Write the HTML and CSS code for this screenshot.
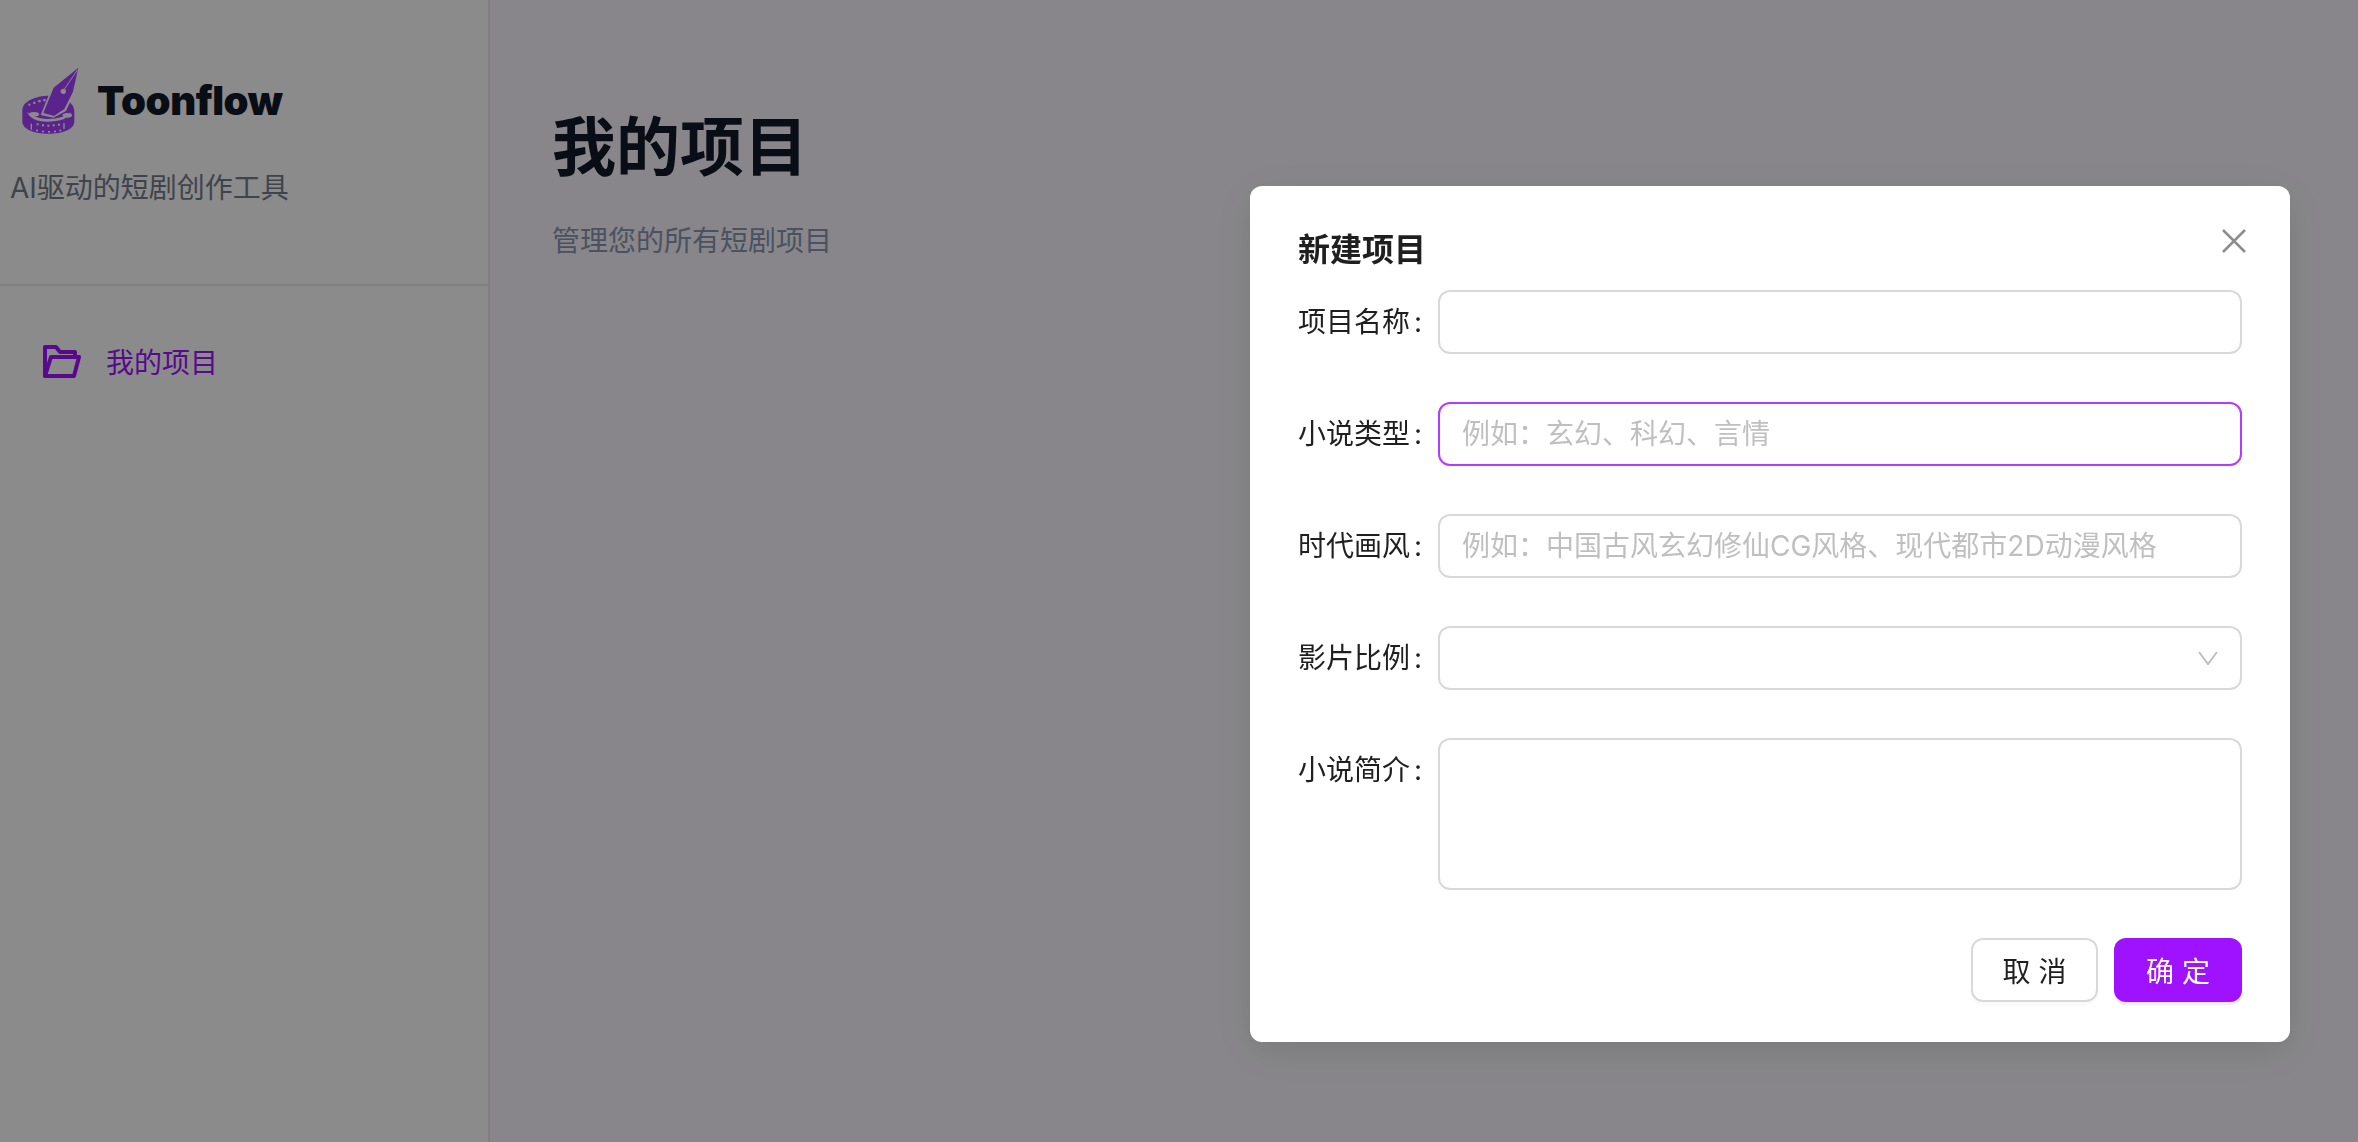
FILE: index.html
```html
<!DOCTYPE html>
<html lang="zh-CN">
<head>
    <meta charset="utf-8">
    <title>Toonflow</title>
    <link rel="stylesheet" href="styles.css">
</head>
<body>
    <div class="app">
        <aside class="sidebar">
            <div class="sidebar-head">
                <div class="brand">
                    <svg class="brand-logo" viewBox="0 0 240 255" width="80" height="85">
                        <!-- film reel -->
                        <path class="logo-fill" d="M37 165 C37 140 75 122 118 122 C160 122 193 142 193 170 L193 200 C193 222 158 236 115 236 C72 236 37 222 37 200 Z"/>
                        <path class="logo-hole" d="M52 170 C62 182 85 190 112 192 C145 192 172 184 182 172 C178 190 150 200 112 200 C80 200 56 188 52 170 Z"/>
                        <ellipse class="logo-hole" cx="72" cy="178" rx="15" ry="7"/>
                        <ellipse class="logo-hole" cx="172" cy="181" rx="14" ry="7"/>
                        <g class="logo-hole">
                            <rect x="55" y="146" width="6" height="6"/>
                            <rect x="70" y="140" width="6" height="7"/>
                            <rect x="85" y="135" width="7" height="7"/>
                            <rect x="100" y="132" width="7" height="7"/>
                            <rect x="62" y="206" width="4" height="18"/>
                            <rect x="80" y="205" width="6" height="6"/>
                            <rect x="96" y="208" width="6" height="6"/>
                            <rect x="112" y="209" width="6" height="6"/>
                            <rect x="128" y="208" width="6" height="6"/>
                            <rect x="144" y="206" width="6" height="6"/>
                            <rect x="160" y="204" width="4" height="18"/>
                            <rect x="78" y="224" width="6" height="5"/>
                            <rect x="96" y="227" width="6" height="5"/>
                            <rect x="114" y="228" width="6" height="5"/>
                            <rect x="132" y="227" width="6" height="5"/>
                            <rect x="148" y="224" width="6" height="5"/>
                        </g>
                        <!-- pen nib -->
                        <path class="logo-outline" d="M208 34 L194 112 L168 168 L130 188 L92 180 L126 96 Z"/>
                        <path class="logo-fill" d="M205 38 L189 110 L163 162 L132 183 L100 174 L131 98 Z"/>
                        <path class="logo-line" d="M203 44 L162 104"/>
                        <circle class="logo-hole" cx="160" cy="109" r="8"/>
                    </svg>
                    <span class="brand-name">Toonflow</span>
                </div>
                <p class="tagline">AI驱动的短剧创作工具</p>
            </div>
            <nav class="nav">
                <a href="#" class="nav-item">
                    <svg class="nav-icon" viewBox="0 0 38 33" width="38" height="33">
                        <path d="M2 31 V2 H13 L17 7 H32 V12"/>
                        <path d="M2 31 H31 L36 12 H8 Z"/>
                    </svg>
                    <span>我的项目</span>
                </a>
            </nav>
        </aside>
        <main class="main">
            <h1>我的项目</h1>
            <p class="subtitle">管理您的所有短剧项目</p>
        </main>
    </div>

    <div class="overlay">
        <div class="modal">
            <svg class="modal-close" viewBox="0 0 24 24" width="24" height="24">
                <path d="M1 1 L23 23 M23 1 L1 23"/>
            </svg>
            <div class="modal-title">新建项目</div>
            <form class="form">
                <label class="form-label">项目名称<i>:</i></label>
                <input class="field" type="text">

                <label class="form-label">小说类型<i>:</i></label>
                <input class="field field-active" type="text" placeholder="例如：玄幻、科幻、言情">

                <label class="form-label">时代画风<i>:</i></label>
                <input class="field" type="text" placeholder="例如：中国古风玄幻修仙CG风格、现代都市2D动漫风格">

                <label class="form-label">影片比例<i>:</i></label>
                <div class="field field-select">
                    <svg viewBox="0 0 20 14" width="20" height="14">
                        <path d="M1 1 L10 13 L19 1"/>
                    </svg>
                </div>

                <label class="form-label">小说简介<i>:</i></label>
                <textarea class="field field-area"></textarea>
            </form>
            <div class="modal-footer">
                <button class="btn btn-default" type="button">取 消</button>
                <button class="btn btn-primary" type="button">确 定</button>
            </div>
        </div>
    </div>
</body>
</html>
```
FILE: styles.css
```css
* {
    box-sizing: border-box;
}

body {
    margin: 0;
    font-family: Inter, "Noto Sans CJK SC", sans-serif;
    background-color: #f8f5fb;
    color: #111827;
}

.app {
    display: flex;
    height: 100vh;
    overflow: hidden;
}

/* Sidebar */
.sidebar {
    width: 490px;
    flex-shrink: 0;
    background-color: #fdfdfd;
    border-right: 2px solid #e7e7e7;
}

.sidebar-head {
    height: 286px;
    padding: 55px 0 0 10px;
    border-bottom: 2px solid #e7e7e7;
}

.brand {
    display: flex;
    align-items: center;
    gap: 7px;
}

.brand-logo {
    display: block;
}

.logo-fill {
    fill: #a741ff;
}

.logo-hole {
    fill: #fdfdfd;
}

.logo-outline {
    fill: #fdfdfd;
}

.logo-line {
    fill: none;
    stroke: #fdfdfd;
    stroke-width: 3;
}

.brand-name {
    padding-top: 6px;
    font-size: 40px;
    font-weight: 900;
    letter-spacing: -0.4px;
    color: #111827;
}

.tagline {
    margin: 28px 0 0;
    font-size: 28px;
    line-height: 40px;
    color: #737c8a;
}

.nav {
    padding: 48px 0 0 43px;
}

.nav-item {
    display: flex;
    align-items: center;
    gap: 25px;
    height: 54px;
    font-size: 28px;
    color: #a112ff;
    text-decoration: none;
}

.nav-icon path {
    fill: none;
    stroke: #a112ff;
    stroke-width: 4;
    stroke-linejoin: round;
}

/* Main */
.main {
    flex: 1;
    padding: 105px 0 0 62px;
}

.main h1 {
    margin: 0;
    font-size: 64px;
    line-height: 84px;
    font-weight: 700;
}

.subtitle {
    margin: 32px 0 0;
    font-size: 28px;
    line-height: 40px;
    color: #8895af;
}

/* Modal */
.overlay {
    position: fixed;
    inset: 0;
    display: flex;
    justify-content: flex-end;
    align-items: flex-start;
    padding: 186px 68px 0 0;
    background-color: rgba(0, 0, 0, 0.45);
}

.modal {
    position: relative;
    width: 1040px;
    padding: 44px 48px 40px 48px;
    background-color: #ffffff;
    border-radius: 12px;
    box-shadow: 0 9px 42px rgba(0, 0, 0, 0.12);
}

.modal-close {
    position: absolute;
    top: 43px;
    right: 44px;
}

.modal-close path {
    fill: none;
    stroke: #8c8c8c;
    stroke-width: 2.5;
}

.modal-title {
    margin-bottom: 20px;
    font-size: 32px;
    line-height: 40px;
    font-weight: 700;
    color: #1f1f1f;
}

.form {
    display: grid;
    grid-template-columns: 140px 1fr;
    row-gap: 48px;
}

.form-label {
    font-size: 28px;
    line-height: 64px;
    color: #1f1f1f;
}

.form-label i {
    margin-left: 4px;
    font-style: normal;
}

.field {
    display: block;
    width: 100%;
    height: 64px;
    padding: 0 22px;
    font-family: inherit;
    font-size: 28px;
    color: #1f1f1f;
    background-color: #ffffff;
    border: 2px solid #d9d9d9;
    border-radius: 12px;
    outline: none;
}

.field::placeholder {
    color: #bfbfbf;
    opacity: 1;
}

.field-active {
    border-color: #b43cff;
}

.field-select {
    display: flex;
    align-items: center;
    justify-content: flex-end;
    padding-right: 22px;
}

.field-select path {
    fill: none;
    stroke: #bfbfbf;
    stroke-width: 2;
}

.field-area {
    height: 152px;
    resize: none;
}

.modal-footer {
    display: flex;
    justify-content: flex-end;
    gap: 16px;
    margin-top: 48px;
}

.btn {
    height: 64px;
    padding: 0;
    font-family: inherit;
    font-size: 28px;
    border-radius: 12px;
    cursor: pointer;
}

.btn-default {
    width: 127px;
    color: #1f1f1f;
    background-color: #ffffff;
    border: 2px solid #d9d9d9;
    box-shadow: 0 3px 0 rgba(0, 0, 0, 0.02);
}

.btn-primary {
    width: 128px;
    color: #ffffff;
    background-color: #9f12ff;
    border: none;
    box-shadow: 0 3px 0 rgba(190, 60, 255, 0.12);
}
```
